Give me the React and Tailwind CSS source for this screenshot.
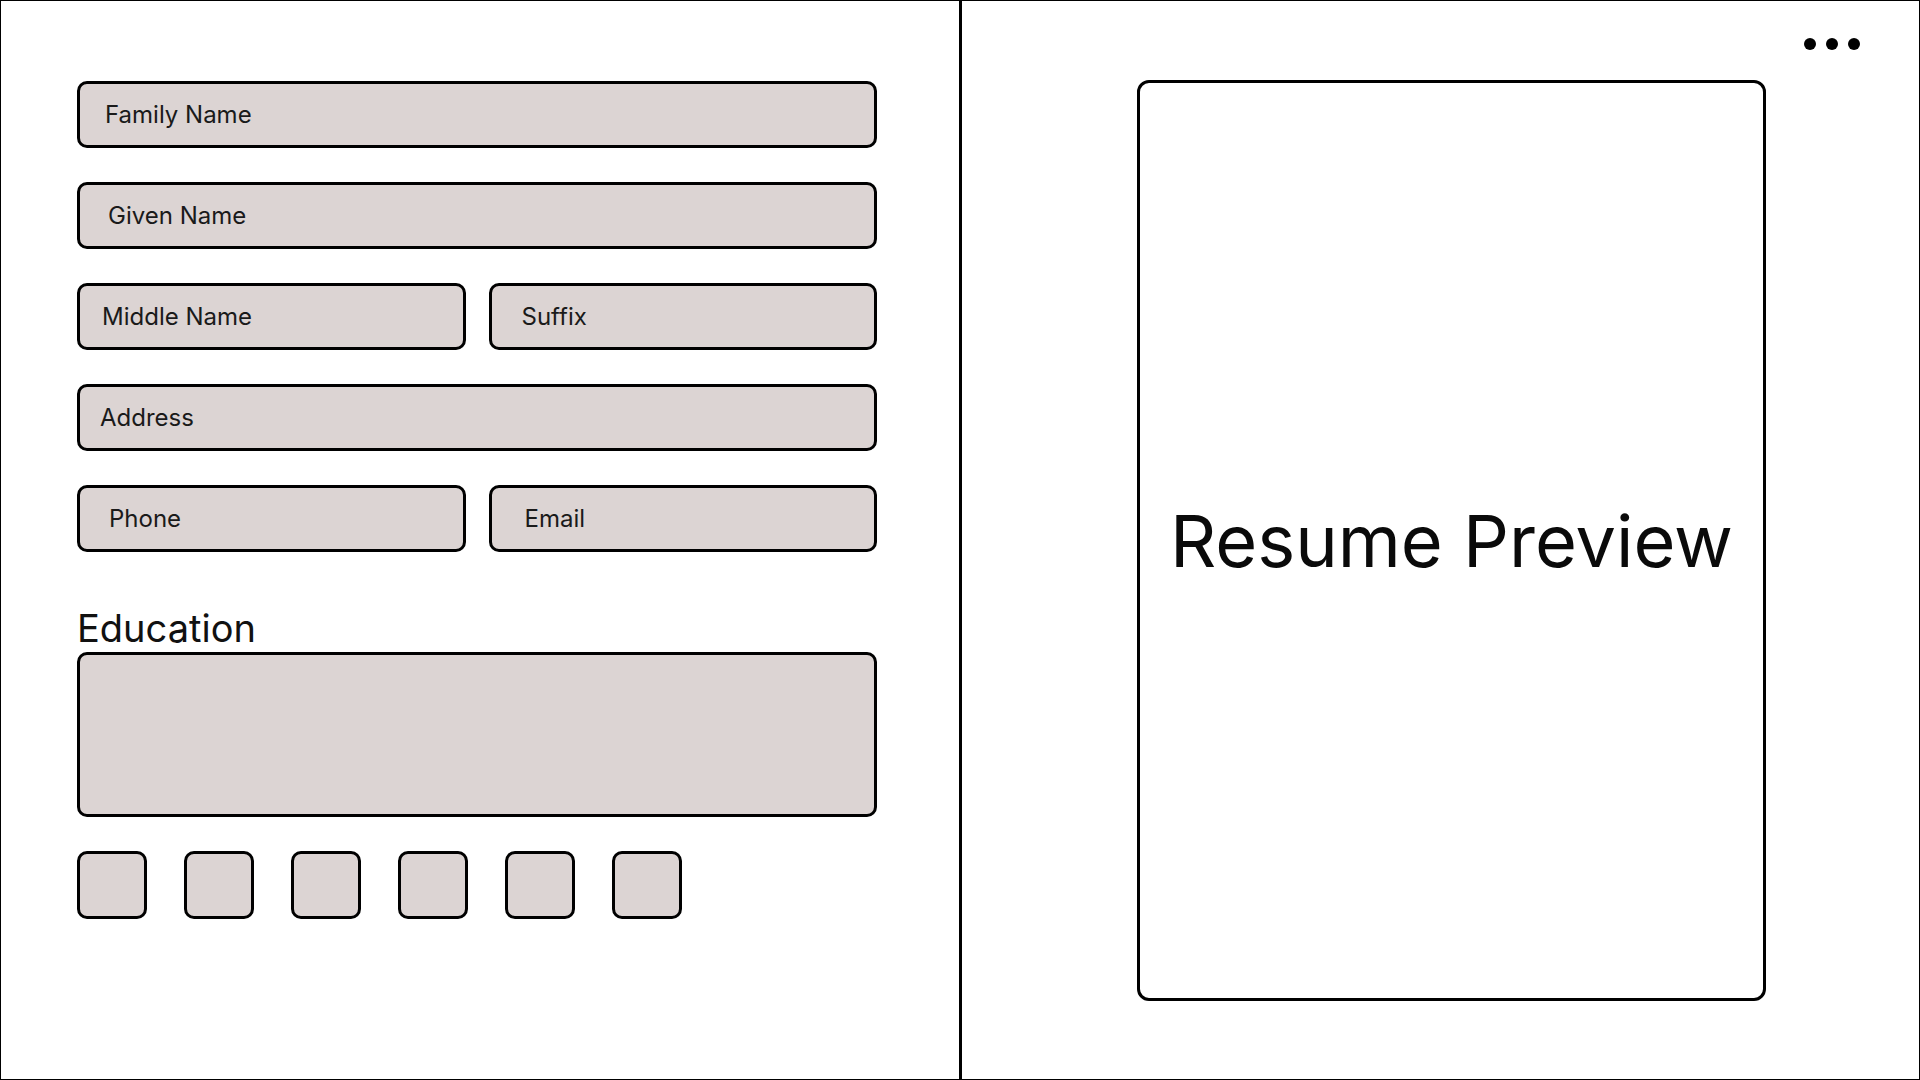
const Field = ({ label, pad, className = "" }) => (
  <div
    className={`h-[67px] flex items-center bg-[#dcd4d3] border-[3px] border-black rounded-[10px] text-[24px] text-[#1a1a1a] ${pad} ${className}`}
  >
    {label}
  </div>
);

const App = () => {
  return (
    <div
      className="w-[1920px] h-[1080px] border border-black bg-white flex overflow-hidden"
      style={{ fontFamily: "Inter, 'Noto Sans', sans-serif" }}
    >
      {/* form side */}
      <div className="w-[961px] h-full border-r-[3px] border-black pt-[80px] pl-[76px]">
        <div className="w-[800px] flex flex-col gap-[34px]">
          <Field label="Family Name" pad="pl-[25px]" />
          <Field label="Given Name" pad="pl-[28px]" />
          <div className="grid grid-cols-2 gap-[23px]">
            <Field label="Middle Name" pad="pl-[22px]" />
            <Field label="Suffix" pad="pl-[30px]" />
          </div>
          <Field label="Address" pad="pl-[20px]" />
          <div className="grid grid-cols-2 gap-[23px]">
            <Field label="Phone" pad="pl-[29px]" />
            <Field label="Email" pad="pl-[33px]" />
          </div>
        </div>

        <div className="w-[800px] mt-[57px]">
          <h2 className="text-[38px] leading-none text-[#111]">Education</h2>
          <div className="mt-[5px] h-[165px] bg-[#dcd4d3] border-[3px] border-black rounded-[10px]" />
          <div className="mt-[34px] flex gap-[37px]">
            {[0, 1, 2, 3, 4, 5].map((i) => (
              <div
                key={i}
                className="w-[70px] h-[68px] bg-[#dcd4d3] border-[3px] border-black rounded-[10px]"
              />
            ))}
          </div>
        </div>
      </div>

      {/* preview side */}
      <div className="flex-1 h-full flex items-start pl-[175px]">
        <div className="mt-[79px] w-[629px] h-[921px] border-[3px] border-black rounded-[12px] flex items-center justify-center">
          <span className="text-[72px] text-[#0a0a0a] leading-none">Resume Preview</span>
        </div>
        <div className="mt-[37px] ml-[38px] flex gap-[10px]">
          <span className="w-[12px] h-[12px] rounded-full bg-black" />
          <span className="w-[12px] h-[12px] rounded-full bg-black" />
          <span className="w-[12px] h-[12px] rounded-full bg-black" />
        </div>
      </div>
    </div>
  );
};

export default App;
